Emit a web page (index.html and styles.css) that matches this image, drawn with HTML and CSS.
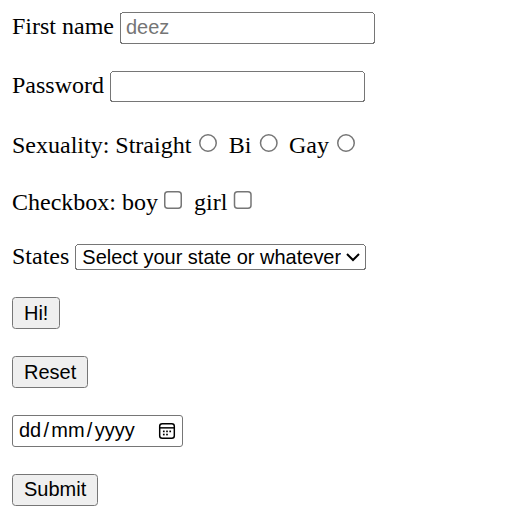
FILE: index.html
```html
<!DOCTYPE html>
<html lang="en">
<head>
<meta charset="utf-8">
<title>Form</title>
<link rel="stylesheet" href="styles.css">
</head>
<body>
<form class="form">
  <label for="fn">First name</label> <input class="field text" type="text" id="fn" placeholder="deez"><br><br>
  <label for="pw">Password</label> <input class="field text" type="password" id="pw"><br><br>
  Sexuality: <label>Straight<input type="radio" name="s"></label> <label>Bi<input type="radio" name="s"></label> <label>Gay<input type="radio" name="s"></label><br><br>
  Checkbox: <label>boy<input type="checkbox"></label> <label>girl<input type="checkbox"></label><br><br>
  <label for="st">States</label> <select class="field" id="st"><option>Select your state or whatever</option></select><br><br>
  <button class="field" type="button">Hi!</button><br><br>
  <input class="field" type="reset"><br><br>
  <span class="field date" role="textbox" aria-label="Date"><span class="seg">dd</span><span class="sep">/</span><span class="seg">mm</span><span class="sep">/</span><span class="seg">yyyy</span><svg class="cal" viewBox="0 0 16 16" width="12" height="12" aria-hidden="true"><rect x="1.5" y="1.5" width="13" height="13" rx="2.2" fill="none" stroke="#000" stroke-width="1.3"/><line x1="1.5" y1="5.2" x2="14.5" y2="5.2" stroke="#000" stroke-width="1.3"/><rect x="4.4" y="7.6" width="1.5" height="1.5" fill="#000"/><rect x="7.25" y="7.6" width="1.5" height="1.5" fill="#000"/><rect x="10.1" y="7.6" width="1.5" height="1.5" fill="#000"/><rect x="4.4" y="10.4" width="1.5" height="1.5" fill="#000"/><rect x="7.25" y="10.4" width="1.5" height="1.5" fill="#000"/></svg></span><br><br>
  <input class="field" type="submit">
</form>
</body>
</html>
```
FILE: styles.css
```css
html {
  zoom: 1.5;
}
body {
  margin: 8px;
  font-family: "Liberation Serif", serif;
  font-size: 16px;
  color: #000;
  background: #fff;
}
.form {
  margin: 0;
}
.field {
  font-family: "Liberation Sans", Arial, sans-serif;
  font-size: 13.333px;
}
.text {
  box-sizing: border-box;
  width: 170px;
  height: 21px;
}
.date {
  display: inline-flex;
  align-items: center;
  box-sizing: border-box;
  width: 114px;
  height: 21px;
  padding: 0 4px 0 3px;
  border: 1px solid #767676;
  border-radius: 2px;
  color: #000;
}
.seg {
  padding: 0 1px;
}
.sep {
  padding: 0 0.5px;
}
.cal {
  margin-left: auto;
}
```
